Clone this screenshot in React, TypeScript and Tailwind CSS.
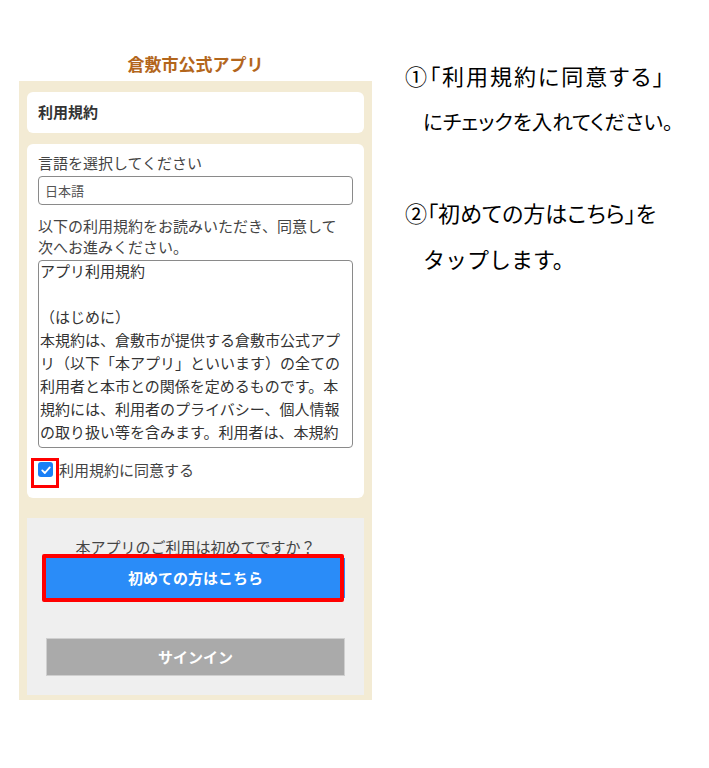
const jp = "font-['Noto_Sans_CJK_JP','Noto_Sans',sans-serif]";

const termsLines = [
  'アプリ利用規約',
  '\u00a0',
  '（はじめに）',
  '本規約は、倉敷市が提供する倉敷市公式アプ',
  'リ（以下「本アプリ」といいます）の全ての',
  '利用者と本市との関係を定めるものです。本',
  '規約には、利用者のプライバシー、個人情報',
  'の取り扱い等を含みます。利用者は、本規約',
  'の内容を十分に理解し、同意した上で本アプ',
];

function CheckBox() {
  return (
    <div className="relative w-[15px] h-[15px] shrink-0">
      <div className="w-[15px] h-[15px] rounded-[3px] bg-[#1a7ff6] flex items-center justify-center">
        <svg viewBox="0 0 16 16" className="w-[12px] h-[12px]" fill="none">
          <path d="M3 8.5 L6.5 12 L13 4.5" stroke="white" strokeWidth="2.4" strokeLinecap="round" strokeLinejoin="round" />
        </svg>
      </div>
      {/* highlight box drawn over the screenshot */}
      <div className="absolute left-[-7px] top-[-4px] w-[28px] h-[30px] border-[3px] border-[#ff0000]" />
    </div>
  );
}

export default function App() {
  return (
    <div className={`min-h-screen bg-white flex pl-[19px] pt-[52px] ${jp}`}>
      {/* phone screen */}
      <div className="w-[353px] flex flex-col">
        <div className="h-[24px] mb-[5px] text-center text-[17px] leading-[24px] font-bold text-[#b3661c]">
          倉敷市公式アプリ
        </div>

        <div className="bg-[#f3ebd4] px-[8px] pt-[11px] pb-[5px] flex flex-col">
          <div className="h-[41px] bg-white rounded-[6px] px-[11px] flex items-center text-[15px] font-bold text-[#333]">
            利用規約
          </div>

          <div className="mt-[11px] bg-white rounded-[6px] px-[11px] pt-[8px] pb-[17px] flex flex-col text-[15px] leading-[21px] text-[#444]">
            <div>言語を選択してください</div>
            <div className="mt-[3px] h-[29px] border border-[#8a8a8a] rounded-[4px] px-[6px] flex items-center text-[13px] text-[#555]">
              日本語
            </div>
            <div className="mt-[10px]">
              以下の利用規約をお読みいただき、同意して
              <br />
              次へお進みください。
            </div>
            <div className="mt-[3px] h-[188px] border border-[#8a8a8a] rounded-[4px] pl-[1px] overflow-hidden text-[#333] leading-[23px]">
              <div className="-mt-[2px]">
                {termsLines.map((line, i) => (
                  <div key={i} className="whitespace-nowrap">
                    {line}
                  </div>
                ))}
              </div>
            </div>
            <div className="mt-[10px] h-[23px] flex items-center">
              <CheckBox />
              <span className="ml-[6px] text-[#444]">利用規約に同意する</span>
            </div>
          </div>

          <div className="mt-[20px] h-[177px] bg-[#efefef] px-[19px] pt-[18px] flex flex-col">
            <div className="text-center text-[15px] leading-[21px] text-[#444]">
              本アプリのご利用は初めてですか？
            </div>
            <div className="relative mt-[1px]">
              <div className="h-[40px] bg-[#2a8cf8] flex items-center justify-center text-white text-[15px] font-bold">
                初めての方はこちら
              </div>
              <div className="absolute left-[-4px] right-[1px] top-[-4px] bottom-[-4px] border-4 border-[#ff0000] rounded-[2px]" />
            </div>
            <div className="mt-[40px] h-[38px] bg-[#aaaaaa] border border-[#cfcfcf] flex items-center justify-center text-white text-[15px] font-bold">
              サインイン
            </div>
          </div>
        </div>
      </div>

      {/* instructions */}
      <div className="ml-[33px] text-[22px] leading-[46px] text-black">
        <div className="whitespace-nowrap [font-feature-settings:'palt'] tracking-[2px]">①「利用規約に同意する」</div>
        <div className="pl-[18px] text-[20.5px] [font-feature-settings:'palt']">にチェックを入れてください。</div>
        <div className="h-[45px]" />
        <div className="[font-feature-settings:'palt']">②「初めての方はこちら」を</div>
        <div className="pl-[18px]">タップします。</div>
      </div>
    </div>
  );
}
